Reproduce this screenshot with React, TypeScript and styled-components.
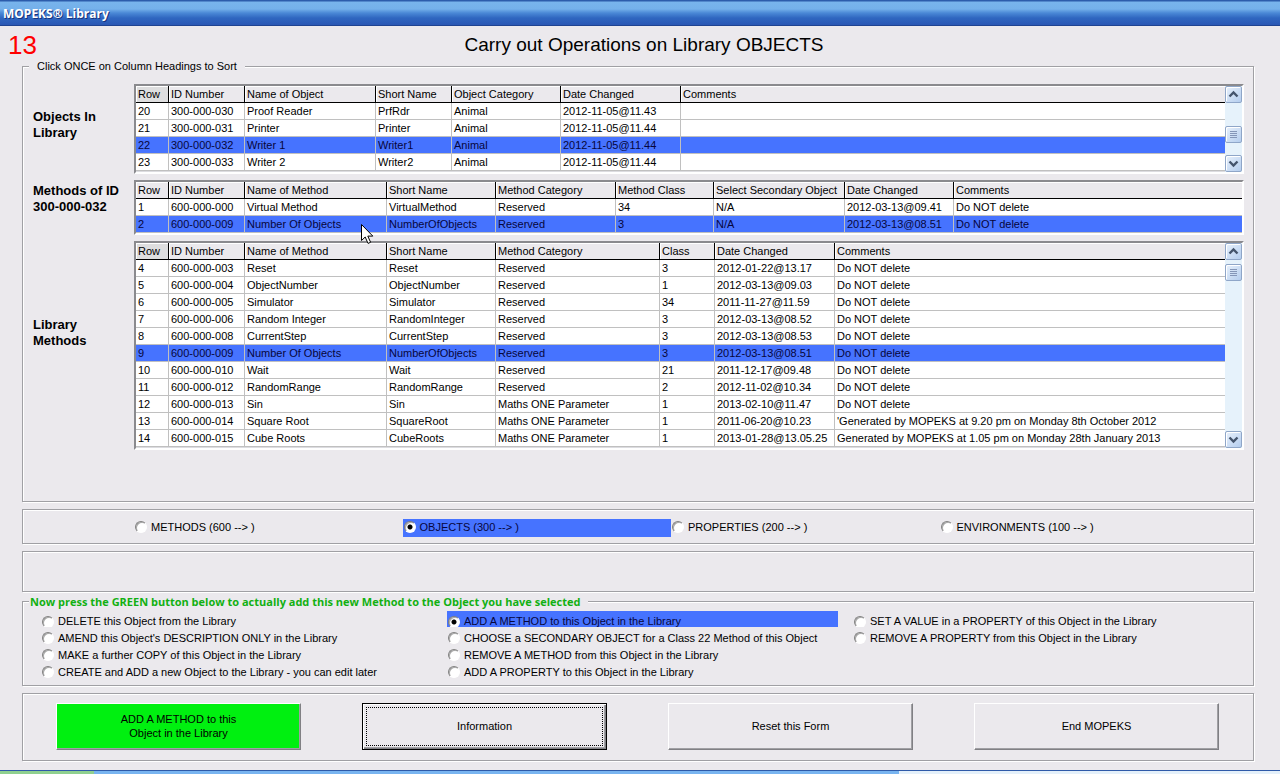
import React, { useState } from "react";
import styled, { createGlobalStyle, css } from "styled-components";

const face = "#ebe9ed";
const shadow = "#a0a0a4";
const highlight = "#4673ff";

const GlobalStyle = createGlobalStyle`
  *, *::before, *::after { box-sizing: border-box; }
  body {
    margin: 0;
    background: ${face};
    color: #000;
    font: 11px/15px "Liberation Sans", Arial, sans-serif;
  }
  button, input { font: inherit; color: inherit; }
`;

const Window = styled.div`
  position: relative;
  display: flex;
  flex-direction: column;
  min-height: 100vh;
`;

const TitleBar = styled.header`
  height: 26px;
  padding: 1px 3px 0;
  color: #fff;
  font: bold 12px/25px "Open Sans", "Trebuchet MS", sans-serif;
  text-shadow: 1px 1px 0 #17337c;
  border-bottom: 1px solid #1f4391;
  background: linear-gradient(#2c5cab 0, #2c5cab 1px, #78b4ec 2px, #74b0ea 9px, #4a88d6 13px, #2f66c0 18px, #2a57b4 25px);
`;

const Heading = styled.div`
  display: grid;
  grid-template-columns: 54px 1fr 46px;
  align-items: center;
  height: 33px;
  padding-top: 4px;
`;

const Step = styled.span`
  padding-left: 8px;
  color: #f00;
  font-size: 26px;
  line-height: 28px;
`;

const Title = styled.h1`
  margin: 0;
  font-size: 19px;
  font-weight: normal;
  line-height: 28px;
  text-align: center;
`;

const etched = css`
  margin: 0 26px 0 22px;
  border: 1px solid ${shadow};
  box-shadow: 1px 1px 0 #fff, inset 1px 1px 0 #fff;
`;

const Group = styled.fieldset<{ $gap?: number }>`
  ${etched}
  min-width: 0;
  margin-top: ${(p) => p.$gap ?? 0}px;
  padding: 0;
`;

const Legend = styled.legend<{ $notice?: boolean }>`
  margin-left: 6px;
  padding: 0 8px 0 ${(p) => (p.$notice ? 1 : 8)}px;
  height: 15px;
  background: ${face};
  ${(p) =>
    p.$notice &&
    css`
      color: #12b012;
      font: bold 11px/15px "Open Sans", Verdana, sans-serif;
    `}
`;

const Lists = styled.div`
  display: grid;
  grid-template-columns: 101px minmax(0, 1fr);
  row-gap: 6px;
  padding: 10px 9px 51px 10px;
`;

const ListLabel = styled.h2<{ $drop: number }>`
  margin: 0;
  padding-top: ${(p) => p.$drop}px;
  font-size: 13px;
  line-height: 16px;
`;

const Sunken = styled.div`
  display: flex;
  align-items: stretch;
  background: #fff;
  border: 2px solid;
  border-color: #8a8a8e #fff #fff #8a8a8e;
  box-shadow: inset -1px -1px 0 #dcdce0;
`;

const Table = styled.table<{ $more?: boolean }>`
  flex: 1;
  width: 0;
  table-layout: fixed;
  border-spacing: 0;
  margin-bottom: ${(p) => (p.$more ? 1 : 0)}px;
`;

const HeadCell = styled.th<{ $shaded?: boolean }>`
  height: 17px;
  padding: 0 0 0 2px;
  overflow: hidden;
  white-space: nowrap;
  text-align: left;
  font-weight: normal;
  background: ${(p) => (p.$shaded ? "#dededf" : face)};
  border-right: 1px solid #000;
  border-bottom: 1px solid #000;
  box-shadow: inset 1px 1px 0 #fff;
  cursor: pointer;
  &:last-child { border-right: 0; }
`;

const Row = styled.tr<{ $selected: boolean }>`
  background: ${(p) => (p.$selected ? highlight : "#fff")};
  color: ${(p) => (p.$selected ? "#06063c" : "#000")};
`;

const Cell = styled.td`
  height: 17px;
  padding: 0 0 0 2px;
  overflow: hidden;
  white-space: nowrap;
  border-right: 1px solid #c0c0c0;
  border-bottom: 1px solid #c0c0c0;
  &:last-child { border-right: 0; }
`;

const ScrollTrack = styled.div`
  display: flex;
  flex-direction: column;
  width: 17px;
  background: #e6f2fb;
`;

const ScrollPart = styled.button`
  display: block;
  flex: none;
  width: 17px;
  height: 17px;
  padding: 0;
  border: 1px solid #8fa6c8;
  border-radius: 2px;
  background: linear-gradient(135deg, #e8f1fc, #b4cdee);
  box-shadow: inset 1px 1px 0 #fff;
  svg { display: block; }
`;

const ScrollThumb = styled(ScrollPart)<{ $offset: number }>`
  margin-top: ${(p) => p.$offset}px;
  margin-bottom: auto;
`;

const Panel = styled.section<{ $gap: number; $height?: number }>`
  ${etched}
  margin-top: ${(p) => p.$gap}px;
  min-height: ${(p) => p.$height ?? 0}px;
`;

const TypeChoices = styled.div`
  display: grid;
  grid-template-columns: repeat(4, 1fr);
  padding: 9px 45px 6px 111px;
`;

const ActionChoices = styled.div`
  display: grid;
  grid-template-columns: repeat(3, 1fr);
  column-gap: 15px;
  padding: 2px 9px 4px 18px;
`;

const ChoiceColumn = styled.div`
  display: flex;
  flex-direction: column;
`;

const Choice = styled.label<{ $selected: boolean }>`
  display: flex;
  align-items: center;
  gap: 4px;
  height: 18px;
  padding: 0 0 2px 1px;
  white-space: nowrap;
  background: ${(p) => (p.$selected ? highlight : "transparent")};
  color: ${(p) => (p.$selected ? "#06063c" : "#000")};
  ${ChoiceColumn} & {
    height: 17px;
    padding-bottom: 1px;
  }
  ${ChoiceColumn} &:first-child {
    height: 16px;
    margin-bottom: 3px;
    padding-top: 6px;
    overflow: hidden;
  }
`;

const Radio = styled.input.attrs({ type: "radio" })`
  appearance: none;
  flex: none;
  width: 12px;
  height: 12px;
  margin: 0;
  border: 1px solid;
  border-color: #808080 #fff #fff #808080;
  border-radius: 50%;
  background: #fff;
  box-shadow: inset 1px 1px 0 #a8a8a8;
  &:checked {
    background: radial-gradient(circle, #000 0, #000 2px, #fff 3px);
  }
`;

const Actions = styled.div`
  display: grid;
  grid-template-columns: repeat(4, 1fr);
  gap: 61px;
  padding: 9px 34px 10px 33px;
`;

const ActionButton = styled.button<{ $go?: boolean; $focused?: boolean }>`
  height: 47px;
  padding: 0 0 2px;
  line-height: 14px;
  white-space: pre-line;
  background: ${(p) => (p.$go ? "#00f010" : face)};
  border: 1px solid;
  border-color: #fff #808084 #808084 #fff;
  box-shadow: inset -1px -1px 0 #a0a0a4;
  ${(p) =>
    p.$focused &&
    css`
      border: 1px solid #000;
      box-shadow: inset 1px 1px 0 #fff, inset -1px -1px 0 #808084, inset -2px -2px 0 #a0a0a4;
      outline: 1px dotted #000;
      outline-offset: -5px;
    `}
`;

const TaskBar = styled.footer`
  display: grid;
  grid-template-columns: 94px 805px 1fr;
  height: 4px;
  margin-top: 9px;
  border-top: 1px solid #2f5aa8;
`;

const TaskSegment = styled.span<{ $tone: string }>`
  background: ${(p) => p.$tone};
`;

const Pointer = styled.svg`
  position: absolute;
  left: 361px;
  top: 224px;
  pointer-events: none;
`;

type Column = { name: string; width?: number };

const objectColumns: Column[] = [
  { name: "Row", width: 33 },
  { name: "ID Number", width: 76 },
  { name: "Name of Object", width: 131 },
  { name: "Short Name", width: 76 },
  { name: "Object Category", width: 109 },
  { name: "Date Changed", width: 120 },
  { name: "Comments" },
];

const objects = [
  ["20", "300-000-030", "Proof Reader", "PrfRdr", "Animal", "2012-11-05@11.43", ""],
  ["21", "300-000-031", "Printer", "Printer", "Animal", "2012-11-05@11.44", ""],
  ["22", "300-000-032", "Writer 1", "Writer1", "Animal", "2012-11-05@11.44", ""],
  ["23", "300-000-033", "Writer 2", "Writer2", "Animal", "2012-11-05@11.44", ""],
];

const methodColumns: Column[] = [
  { name: "Row", width: 33 },
  { name: "ID Number", width: 76 },
  { name: "Name of Method", width: 142 },
  { name: "Short Name", width: 109 },
  { name: "Method Category", width: 120 },
  { name: "Method Class", width: 98 },
  { name: "Select Secondary Object", width: 131 },
  { name: "Date Changed", width: 109 },
  { name: "Comments" },
];

const methods = [
  ["1", "600-000-000", "Virtual Method", "VirtualMethod", "Reserved", "34", "N/A", "2012-03-13@09.41", "Do NOT delete"],
  ["2", "600-000-009", "Number Of Objects", "NumberOfObjects", "Reserved", "3", "N/A", "2012-03-13@08.51", "Do NOT delete"],
];

const libraryColumns: Column[] = [
  { name: "Row", width: 33 },
  { name: "ID Number", width: 76 },
  { name: "Name of Method", width: 142 },
  { name: "Short Name", width: 109 },
  { name: "Method Category", width: 164 },
  { name: "Class", width: 55 },
  { name: "Date Changed", width: 120 },
  { name: "Comments" },
];

const library = [
  ["4", "600-000-003", "Reset", "Reset", "Reserved", "3", "2012-01-22@13.17", "Do NOT delete"],
  ["5", "600-000-004", "ObjectNumber", "ObjectNumber", "Reserved", "1", "2012-03-13@09.03", "Do NOT delete"],
  ["6", "600-000-005", "Simulator", "Simulator", "Reserved", "34", "2011-11-27@11.59", "Do NOT delete"],
  ["7", "600-000-006", "Random Integer", "RandomInteger", "Reserved", "3", "2012-03-13@08.52", "Do NOT delete"],
  ["8", "600-000-008", "CurrentStep", "CurrentStep", "Reserved", "3", "2012-03-13@08.53", "Do NOT delete"],
  ["9", "600-000-009", "Number Of Objects", "NumberOfObjects", "Reserved", "3", "2012-03-13@08.51", "Do NOT delete"],
  ["10", "600-000-010", "Wait", "Wait", "Reserved", "21", "2011-12-17@09.48", "Do NOT delete"],
  ["11", "600-000-012", "RandomRange", "RandomRange", "Reserved", "2", "2012-11-02@10.34", "Do NOT delete"],
  ["12", "600-000-013", "Sin", "Sin", "Maths ONE Parameter", "1", "2013-02-10@11.47", "Do NOT delete"],
  ["13", "600-000-014", "Square Root", "SquareRoot", "Maths ONE Parameter", "1", "2011-06-20@10.23", "'Generated by MOPEKS at 9.20 pm on Monday 8th October 2012"],
  ["14", "600-000-015", "Cube Roots", "CubeRoots", "Maths ONE Parameter", "1", "2013-01-28@13.05.25", "Generated by MOPEKS at 1.05 pm on Monday 28th January 2013"],
];

const objectTypes = ["METHODS (600 --> )", "OBJECTS (300 --> )", "PROPERTIES (200 --> )", "ENVIRONMENTS (100 --> )"];

const operations = [
  [
    "DELETE this Object from the Library",
    "AMEND this Object's DESCRIPTION ONLY in the Library",
    "MAKE a further COPY of this Object in the Library",
    "CREATE and ADD a new Object to the Library - you can edit later",
  ],
  [
    "ADD A METHOD to this Object in the Library",
    "CHOOSE a SECONDARY OBJECT for a Class 22 Method of this Object",
    "REMOVE A METHOD from this Object in the Library",
    "ADD A PROPERTY to this Object in the Library",
  ],
  [
    "SET A VALUE in a PROPERTY of this Object in the Library",
    "REMOVE A PROPERTY from this Object in the Library",
  ],
];

function Chevron({ down }: { down?: boolean }) {
  return (
    <svg width="15" height="15" viewBox="0 0 15 15" aria-hidden="true">
      <path d={down ? "M3.5 5.5 7.5 9.5 11.5 5.5" : "M3.5 9.5 7.5 5.5 11.5 9.5"} fill="none" stroke="#44546c" strokeWidth="2.4" />
    </svg>
  );
}

function ScrollBar({ offset }: { offset: number }) {
  return (
    <ScrollTrack>
      <ScrollPart type="button" aria-label="Scroll up">
        <Chevron />
      </ScrollPart>
      <ScrollThumb type="button" aria-label="Scroll position" $offset={offset}>
        <svg width="15" height="15" viewBox="0 0 15 15" aria-hidden="true">
          <path d="M4 4.5h7M4 6.5h7M4 8.5h7M4 10.5h7" stroke="#8496b8" />
        </svg>
      </ScrollThumb>
      <ScrollPart type="button" aria-label="Scroll down">
        <Chevron down />
      </ScrollPart>
    </ScrollTrack>
  );
}

type GridProps = { label: string; columns: Column[]; rows: string[][]; initial: string; thumb?: number };

function DataGrid({ label, columns, rows, initial, thumb }: GridProps) {
  const [selected, setSelected] = useState(initial);
  const scrolls = thumb !== undefined;
  return (
    <Sunken>
      <Table aria-label={label} $more={scrolls}>
        <colgroup>
          {columns.map((c) => (
            <col key={c.name} width={c.width} />
          ))}
        </colgroup>
        <thead>
          <tr>
            {columns.map((c, i) => (
              <HeadCell key={c.name} scope="col" $shaded={scrolls && i === 0}>
                {c.name}
              </HeadCell>
            ))}
          </tr>
        </thead>
        <tbody>
          {rows.map((row) => (
            <Row key={row[0]} $selected={row[0] === selected} onClick={() => setSelected(row[0])}>
              {row.map((value, i) => (
                <Cell key={i}>{value}</Cell>
              ))}
            </Row>
          ))}
        </tbody>
      </Table>
      {scrolls && <ScrollBar offset={thumb} />}
    </Sunken>
  );
}

type OptionProps = { group: string; text: string; value: string; onPick: (text: string) => void };

function Option({ group, text, value, onPick }: OptionProps) {
  return (
    <Choice $selected={value === text}>
      <Radio name={group} checked={value === text} onChange={() => onPick(text)} />
      {text}
    </Choice>
  );
}

export default function App() {
  const [type, setType] = useState(objectTypes[1]);
  const [operation, setOperation] = useState(operations[1][0]);
  return (
    <Window>
      <GlobalStyle />
      <TitleBar>MOPEKS® Library</TitleBar>
      <Heading>
        <Step>13</Step>
        <Title>Carry out Operations on Library OBJECTS</Title>
      </Heading>

      <Group>
        <Legend>Click ONCE on Column Headings to Sort</Legend>
        <Lists>
          <ListLabel $drop={25}>
            Objects In
            <br />
            Library
          </ListLabel>
          <DataGrid label="Objects In Library" columns={objectColumns} rows={objects} initial="22" thumb={23} />
          <ListLabel $drop={3}>
            Methods of ID
            <br />
            300-000-032
          </ListLabel>
          <DataGrid label="Methods of ID 300-000-032" columns={methodColumns} rows={methods} initial="2" />
          <ListLabel $drop={76}>
            Library
            <br />
            Methods
          </ListLabel>
          <DataGrid label="Library Methods" columns={libraryColumns} rows={library} initial="9" thumb={4} />
        </Lists>
      </Group>

      <Panel $gap={7}>
        <TypeChoices role="radiogroup" aria-label="Library section">
          {objectTypes.map((text) => (
            <Option key={text} group="type" text={text} value={type} onPick={setType} />
          ))}
        </TypeChoices>
      </Panel>

      <Panel $gap={7} $height={41} />

      <Group $gap={2}>
        <Legend $notice>
          Now press the GREEN button below to actually add this new Method to the Object you have selected
        </Legend>
        <ActionChoices>
          {operations.map((column) => (
            <ChoiceColumn key={column[0]}>
              {column.map((text) => (
                <Option key={text} group="operation" text={text} value={operation} onPick={setOperation} />
              ))}
            </ChoiceColumn>
          ))}
        </ActionChoices>
      </Group>

      <Panel $gap={7}>
        <Actions>
          <ActionButton type="button" $go>
            {"ADD A METHOD to this\nObject in the Library"}
          </ActionButton>
          <ActionButton type="button" $focused>
            Information
          </ActionButton>
          <ActionButton type="button">Reset this Form</ActionButton>
          <ActionButton type="button">End MOPEKS</ActionButton>
        </Actions>
      </Panel>

      <TaskBar>
        <TaskSegment $tone="#8fd08f" />
        <TaskSegment $tone="#78b4f0" />
        <TaskSegment $tone="#e4f0fa" />
      </TaskBar>

      <Pointer width="14" height="21" viewBox="0 0 14 21" aria-hidden="true">
        <path d="M.5.5v16l3.7-3.5 2.8 6.4 2.6-1.1-2.8-6.2h5z" fill="#fff" stroke="#000" />
      </Pointer>
    </Window>
  );
}
